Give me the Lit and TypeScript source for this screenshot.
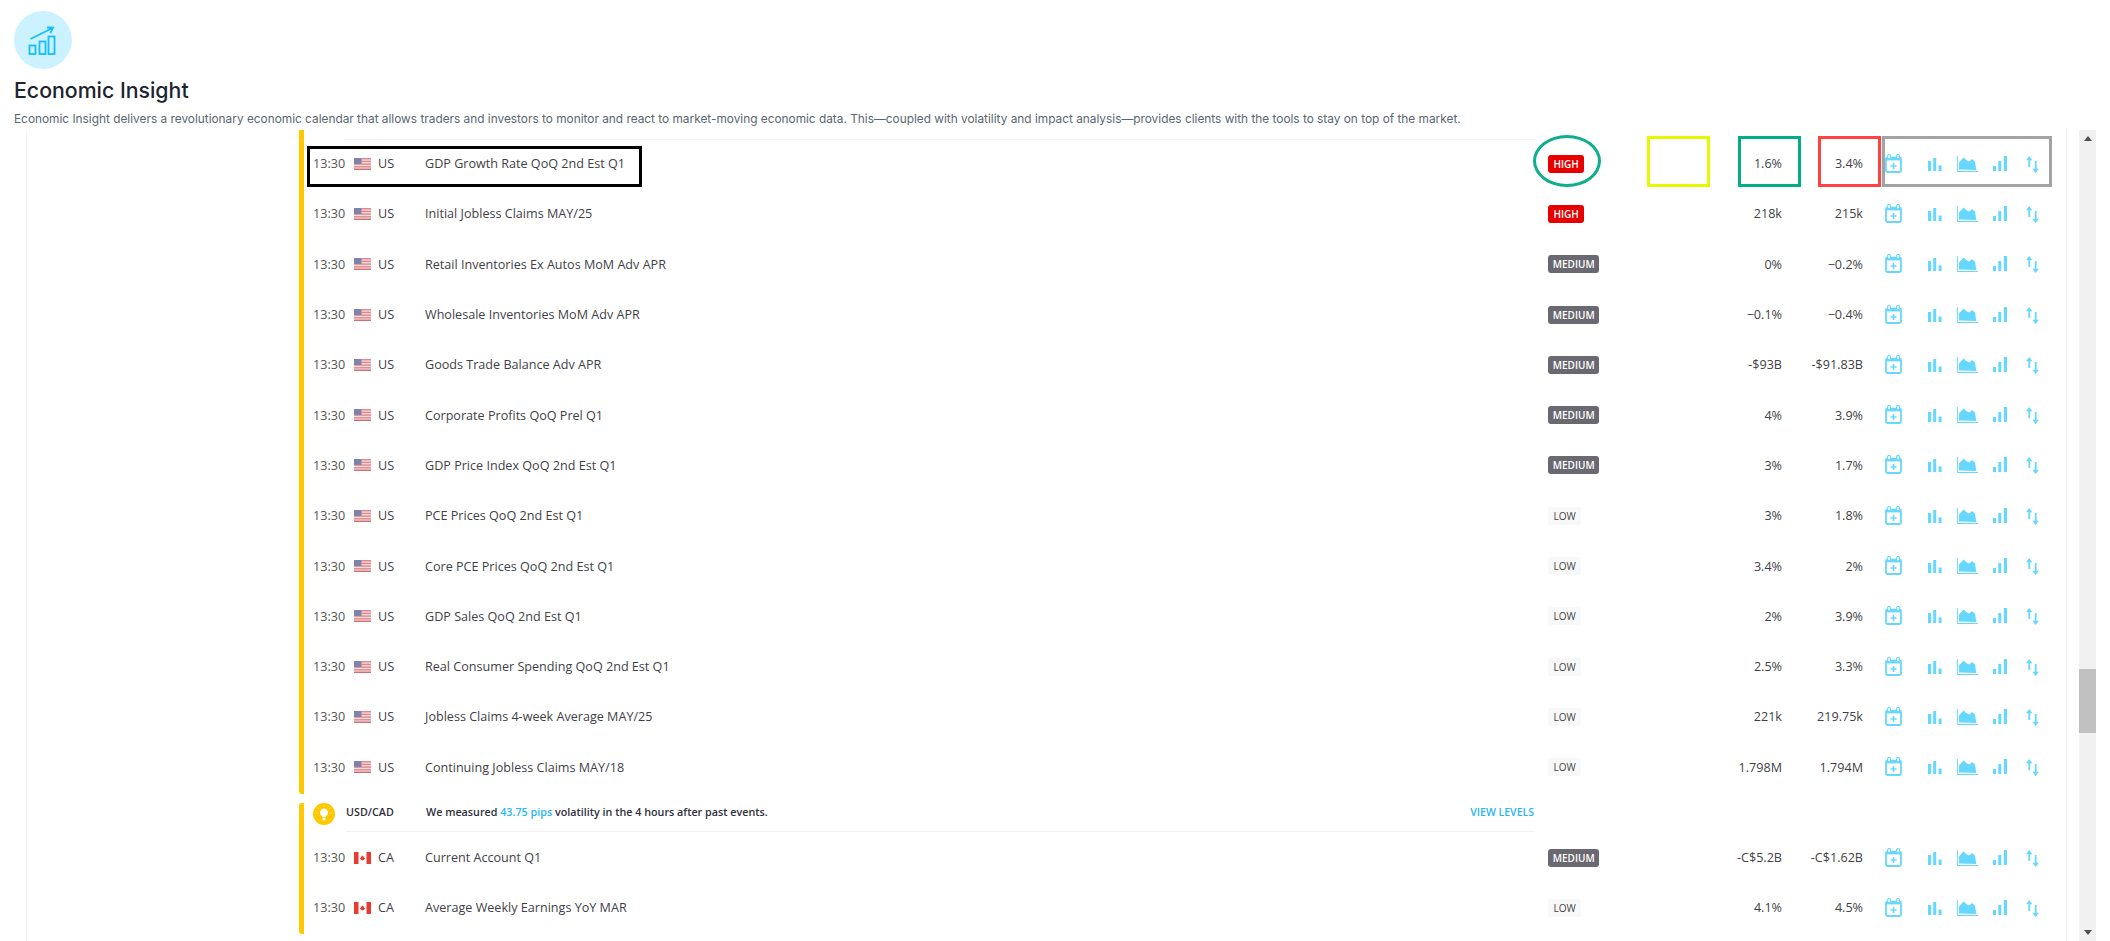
import { LitElement, html, css, svg } from "lit";
import { customElement } from "lit/decorators.js";

type Row = [string, string, string, string, string];
const usRows: Row[] = [
  ["US", "GDP Growth Rate QoQ 2nd Est Q1", "HIGH", "1.6%", "3.4%"],
  ["US", "Initial Jobless Claims MAY/25", "HIGH", "218k", "215k"],
  ["US", "Retail Inventories Ex Autos MoM Adv APR", "MEDIUM", "0%", "−0.2%"],
  ["US", "Wholesale Inventories MoM Adv APR", "MEDIUM", "−0.1%", "−0.4%"],
  ["US", "Goods Trade Balance Adv APR", "MEDIUM", "-$93B", "-$91.83B"],
  ["US", "Corporate Profits QoQ Prel Q1", "MEDIUM", "4%", "3.9%"],
  ["US", "GDP Price Index QoQ 2nd Est Q1", "MEDIUM", "3%", "1.7%"],
  ["US", "PCE Prices QoQ 2nd Est Q1", "LOW", "3%", "1.8%"],
  ["US", "Core PCE Prices QoQ 2nd Est Q1", "LOW", "3.4%", "2%"],
  ["US", "GDP Sales QoQ 2nd Est Q1", "LOW", "2%", "3.9%"],
  ["US", "Real Consumer Spending QoQ 2nd Est Q1", "LOW", "2.5%", "3.3%"],
  ["US", "Jobless Claims 4-week Average MAY/25", "LOW", "221k", "219.75k"],
  ["US", "Continuing Jobless Claims MAY/18", "LOW", "1.798M", "1.794M"],
];
const caRows: Row[] = [
  ["CA", "Current Account Q1", "MEDIUM", "-C$5.2B", "-C$1.62B"],
  ["CA", "Average Weekly Earnings YoY MAR", "LOW", "4.1%", "4.5%"],
];

const marks = [
  { cls: "", x: 307, y: 146, w: 335, h: 41, c: "#000000" },
  { cls: "round", x: 1533, y: 135, w: 68, h: 52, c: "#0fae8c" },
  { cls: "", x: 1647, y: 136, w: 63, h: 51, c: "#e6f700" },
  { cls: "", x: 1738, y: 136, w: 63, h: 51, c: "#00ae8a" },
  { cls: "", x: 1818, y: 136, w: 63, h: 51, c: "#ff4343" },
  { cls: "", x: 1882, y: 136, w: 170, h: 51, c: "#a3a3a3" },
];

const usFlag = svg`<svg class="flag" viewBox="0 0 17 12" width="17" height="12">
  <rect width="17" height="12" fill="#f6dcdc"/>
  <rect y="0" width="17" height="1.4" fill="#dd8a8e"/><rect y="2.7" width="17" height="1.4" fill="#dd8a8e"/>
  <rect y="5.4" width="17" height="1.4" fill="#dd8a8e"/><rect y="8.1" width="17" height="1.4" fill="#dd8a8e"/>
  <rect y="10.6" width="17" height="1.4" fill="#cf6d74"/>
  <rect width="7.5" height="6" fill="#7d83ad"/>
</svg>`;
const caFlag = svg`<svg class="flag" viewBox="0 0 17 12" width="17" height="12">
  <rect width="17" height="12" fill="#fff"/>
  <rect width="4.5" height="12" fill="#ea3b30"/><rect x="12.5" width="4.5" height="12" fill="#ea3b30"/>
  <path d="M8.5 3.2l.8 1.5.9-.4-.3 2 1-.5.3.7-1.2 1 .2.6-1.5-.2V9h-.4v-1.1l-1.5.2.2-.6-1.2-1 .3-.7 1 .5-.3-2 .9.4z" fill="#ea3b30"/>
</svg>`;

const actions = html`<div class="actions">
  <svg class="i-cal" viewBox="0 0 17 19" width="17" height="19" fill="none" stroke="#66d8ff">
    <rect x="1" y="3.6" width="15" height="14.4" rx="1.5" stroke-width="1.8"/>
    <rect x="1" y="3" width="15" height="3.4" fill="#66d8ff" stroke="none"/>
    <rect x="2.6" y="0.4" width="2.8" height="4.4" rx="1.4" fill="#fff" stroke-width="1.1"/>
    <rect x="11.6" y="0.4" width="2.8" height="4.4" rx="1.4" fill="#fff" stroke-width="1.1"/>
    <path d="M8.5 9v6M5.5 12h6" stroke-width="1.6"/>
  </svg>
  <svg class="i-bars" viewBox="0 0 14 13" width="14" height="13" fill="#66d8ff">
    <rect x="0" y="3" width="3.2" height="10"/><rect x="5.2" y="0" width="3" height="13"/><rect x="10.6" y="7.5" width="3" height="5.5"/>
  </svg>
  <svg class="i-area" viewBox="0 0 21 16" width="21" height="16" fill="#66d8ff">
    <path d="M0 0h.9v15H21v1H0z"/><path d="M2 13.6V6.5L6.5 1.5l3.4 3 2.4 1 2.7-2.6 3 2.6 1.3 8.6z"/>
  </svg>
  <svg class="i-step" viewBox="0 0 14 15" width="14" height="15" fill="#66d8ff">
    <rect x="0" y="10" width="3" height="5"/><rect x="5.3" y="5" width="3" height="10"/><rect x="10.8" y="0" width="3.2" height="15"/>
  </svg>
  <svg class="i-sort" viewBox="0 0 13 17" width="13" height="17" fill="#66d8ff">
    <path d="M3.2 0l3.2 4.2H4.2V11H2.4V4.2H0z"/><path d="M9.6 17l3.4-4.2h-2.4V5H8.8v7.8H6.4z"/>
  </svg>
</div>`;

@customElement("app-root")
export class AppRoot extends LitElement {
  static styles = css`
    :host { display: block; width: 2110px; height: 941px; overflow: hidden; background: #fff; position: relative; font-family: "Open Sans", sans-serif; }
    .head { height: 130px; box-sizing: border-box; padding: 11px 0 0 14px; }
    .logo { display: block; width: 58px; height: 58px; }
    h1 { margin: 8px 0 0 0; font: 500 21.3px/26px Inter, sans-serif; color: #1c2430; }
    .desc { margin: 8px 0 0 0; font: 400 11.85px/16px Inter, sans-serif; color: #5a6672; white-space: nowrap; }
    .body { display: flex; height: 811px; }
    .panel { margin-left: 26px; width: 2041px; box-sizing: border-box; border-left: 1px solid #f5f5f5; border-right: 1px solid #f3f3f3; padding-left: 272px; overflow: hidden; }
    .group { border-left: 5px solid #ffc800; border-radius: 3px; }
    .group.top { border-top-left-radius: 0; }
    .group + .group { margin-top: 9px; }
    .strip { height: 9px; margin-left: 41px; width: 1189px; border-bottom: 1px solid #f1f1f1; }
    .row { display: grid; grid-template-columns: 41px 24px 47px 1123px 180px 54px 81px 22px auto; align-items: center; height: 50.3px; box-sizing: border-box; padding: 0 0 3px 9px; font-size: 12.6px; color: #3f3f48; white-space: nowrap; }
    .flag { display: block; }
    .time { color: #555; }
    .num { text-align: right; }
    .badge { display: inline-block; height: 18px; line-height: 18px; padding: 0 5.5px; border-radius: 3px; font-size: 10px; font-weight: 600; }
    .badge.HIGH { background: #e60000; color: #fff; }
    .badge.MEDIUM { background: #6a6870; color: #fff; padding: 0 4.8px; }
    .badge.LOW { background: #f8f8f8; color: #444; font-weight: 400; }
    .actions { display: flex; align-items: flex-start; height: 19px; margin-top: -1px; }
    .actions svg { display: block; flex: none; }
    .i-bars { margin: 4px 0 0 26px; }
    .i-area { margin: 2px 0 0 15px; }
    .i-step { margin: 2px 0 0 15px; }
    .i-sort { margin: 2px 0 0 19px; }
    .bulb { display: block; width: 22px; height: 22px; margin-right: 11px; flex: none; }
    .notice-wrap { height: 31px; display: flex; padding-left: 9px; }
    .notice-in { display: flex; align-items: center; flex: none; width: 1189px; height: 30px; margin-top: -1px; padding: 0 1px 9px 0; box-sizing: border-box; border-bottom: 1px solid #f1f1f1; font-size: 10.75px; font-weight: 600; color: #30303c; white-space: nowrap; }
    .pair { width: 80px; flex: none; }
    .msg { flex: 1; }
    .msg b { font-weight: 600; color: #29b6f6; }
    .levels { color: #29b6f6; font-size: 10.5px; font-weight: 600; }
    .sb { margin-left: 12px; width: 17px; height: 811px; background: #f1f1f1; display: flex; flex-direction: column; }
    .arrow { height: 17px; display: flex; align-items: center; justify-content: center; }
    .up { width: 0; height: 0; border: 4px solid transparent; border-top: 0; border-bottom: 5px solid #505050; }
    .down { width: 0; height: 0; border: 4px solid transparent; border-bottom: 0; border-top: 5px solid #505050; }
    .thumb { height: 64px; margin-top: 522px; background: #c1c1c1; }
    .gap { flex: 1; }
    .mark { position: absolute; box-sizing: border-box; border-width: 3px; border-style: solid; }
    .mark.round { border-radius: 50%; }
  `;

  rowT(r: Row) {
    return html`<div class="row">
      <span class="time">13:30</span>
      ${r[0] === "US" ? usFlag : caFlag}
      <span>${r[0]}</span>
      <span>${r[1]}</span>
      <span><span class="badge ${r[2]}">${r[2]}</span></span>
      <span class="num">${r[3]}</span>
      <span class="num">${r[4]}</span>
      <span></span>
      ${actions}
    </div>`;
  }

  render() {
    return html`
      <div class="head">
        <svg class="logo" viewBox="0 0 58 58">
          <circle cx="29" cy="29" r="29" fill="#ccf2ff"/>
          <g fill="none" stroke="#12bfff" stroke-width="1.8">
            <rect x="15.5" y="34.5" width="6" height="8.5"/>
            <rect x="25.5" y="30.5" width="6" height="12.5"/>
            <rect x="34.5" y="25.5" width="6" height="17.5"/>
            <path d="M16.5 28L38.5 17M33 16.5l6 .2-2.6 5.4"/>
          </g>
        </svg>
        <h1>Economic Insight</h1>
        <div class="desc">Economic Insight delivers a revolutionary economic calendar that allows traders and investors to monitor and react to market-moving economic data. This—coupled with volatility and impact analysis—provides clients with the tools to stay on top of the market.</div>
      </div>
      <div class="body">
        <div class="panel">
          <div class="group top">
            <div class="strip"></div>
            ${usRows.map((r) => this.rowT(r))}
          </div>
          <div class="group">
            <div class="notice-wrap">
              <svg class="bulb" viewBox="0 0 22 22">
                <circle cx="11" cy="11" r="11" fill="#ffc800"/>
                <path d="M11 5.5a4 4 0 0 0-2.4 7.2c.5.4.7.9.7 1.5h3.4c0-.6.2-1.1.7-1.5A4 4 0 0 0 11 5.5z" fill="#fff"/>
                <rect x="9.5" y="15" width="3" height="2.6" rx=".8" fill="#fff"/>
                <path d="M11 2.6v1.2M4.8 5l.9.9M17.2 5l-.9.9M3.4 10.4h1.1M17.5 10.4h1.1" stroke="#fff" stroke-width=".8"/>
              </svg>
              <div class="notice-in">
                <span class="pair">USD/CAD</span>
                <span class="msg">We measured <b>43.75 pips</b> volatility in the 4 hours after past events.</span>
                <span class="levels">VIEW LEVELS</span>
              </div>
            </div>
            ${caRows.map((r) => this.rowT(r))}
          </div>
        </div>
        <div class="sb">
          <div class="arrow"><span class="up"></span></div>
          <div class="thumb"></div>
          <div class="gap"></div>
          <div class="arrow"><span class="down"></span></div>
        </div>
      </div>
      ${marks.map(
        (m) => html`<div class="mark ${m.cls}" style="left:${m.x}px;top:${m.y}px;width:${m.w}px;height:${m.h}px;border-color:${m.c}"></div>`
      )}
    `;
  }
}
